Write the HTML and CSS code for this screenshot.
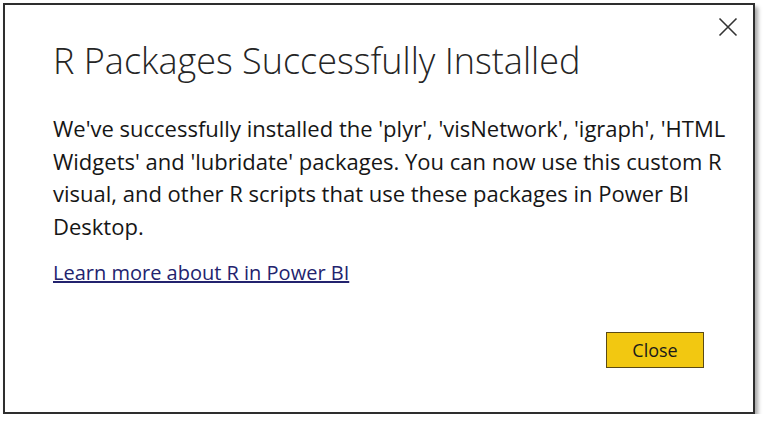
FILE: index.html
```html
<!DOCTYPE html>
<html lang="en">
<head>
<meta charset="utf-8">
<title>R Packages Successfully Installed</title>
<link rel="stylesheet" href="styles.css">
</head>
<body>
<div class="dialog">
  <button class="close-x" aria-label="Close">
    <svg width="20" height="20" viewBox="0 0 20 20"><path d="M1.5 1.5 L18.5 18.5 M18.5 1.5 L1.5 18.5" stroke="#333" stroke-width="1.6" fill="none"/></svg>
  </button>
  <h1 class="title">R Packages Successfully Installed</h1>
  <p class="message">We've successfully installed the 'plyr', 'visNetwork', 'igraph', 'HTML Widgets' and 'lubridate' packages. You can now use this custom R visual, and other R scripts that use these packages in Power BI Desktop.</p>
  <a class="learn" href="#">Learn more about R in Power BI</a>
  <div class="actions">
    <button class="btn-close">Close</button>
  </div>
</div>
</body>
</html>
```

FILE: styles.css
```css
html, body {
  margin: 0;
  padding: 0;
  background: #ffffff;
}
body {
  font-family: "Open Sans", "Noto Sans", sans-serif;
  color: #222;
}
.dialog {
  position: relative;
  margin: 3px 0 0 3px;
  width: 752px;
  height: 411px;
  border: 2px solid #2e2e2e;
  background: #fff;
  box-shadow: 3px 4px 4px rgba(0,0,0,0.35);
  padding: 0 14px 0 48px;
  box-sizing: border-box;
  display: flex;
  flex-direction: column;
}
.close-x {
  position: absolute;
  top: 10px;
  right: 13px;
  width: 24px;
  height: 24px;
  padding: 2px;
  border: 0;
  background: transparent;
}
.title {
  margin: 31px 0 0 0;
  font-weight: 300;
  font-size: 36px;
  line-height: 50px;
  color: #252525;
}
.message {
  margin: 26px 0 0 0;
  font-size: 22px;
  line-height: 32.5px;
  color: #161616;
}
.learn {
  margin-top: 18px;
  align-self: flex-start;
  font-size: 20px;
  line-height: 26px;
  color: #23236e;
  text-decoration: underline;
}
.actions {
  margin-top: auto;
  margin-bottom: 44px;
  display: flex;
  justify-content: flex-end;
  padding-right: 35px;
}
.btn-close {
  width: 98px;
  height: 36px;
  background: #f2c811;
  border: 1px solid #5b4a14;
  font-family: "Open Sans", sans-serif;
  font-size: 18px;
  color: #1a1a1a;
  padding: 0;
}
```
